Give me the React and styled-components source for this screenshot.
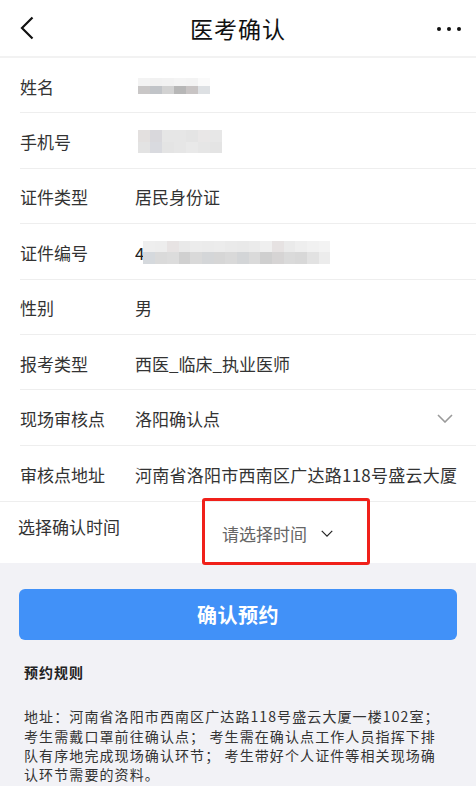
import React from 'react';
import styled, { createGlobalStyle } from 'styled-components';

const GlobalStyle = createGlobalStyle`
  html, body {
    margin: 0;
    padding: 0;
    background: #f2f2f6;
  }
  body {
    font-family: "Noto Sans CJK SC", "Noto Sans", sans-serif;
    color: #333;
  }
  * { box-sizing: border-box; }
`;

const Page = styled.div`
  width: 476px;
  min-height: 786px;
  background: #f2f2f6;
  overflow: hidden;
`;

const Header = styled.header`
  height: 58px;
  display: grid;
  grid-template-columns: 60px 1fr 60px;
  align-items: center;
  background: #fff;
  border-bottom: 2px solid #f2f2f2;
`;

const BackBtn = styled.button`
  border: 0;
  background: none;
  padding: 0 0 0 20px;
  height: 100%;
  display: flex;
  align-items: center;
`;

const Title = styled.h1`
  margin: 0;
  text-align: center;
  font-size: 23px;
  font-weight: 400;
  color: #111;
  letter-spacing: 1px;
`;

const MoreBtn = styled.div`
  display: flex;
  justify-content: flex-end;
  align-items: center;
  gap: 6px;
  padding-right: 15px;
  padding-top: 1px;
`;

const Dot = styled.span`
  width: 4px;
  height: 4px;
  border-radius: 50%;
  background: #111;
`;

const Form = styled.section`
  background: #fff;
  padding-left: 20px;
`;

const Row = styled.div`
  height: 55.4px;
  display: flex;
  align-items: center;
  border-bottom: ${(p) => (p.$last ? 'none' : '1px solid #eeeeee')};
  padding-top: 2px;
`;

const Label = styled.div`
  width: 115px;
  flex-shrink: 0;
  font-size: 17px;
  color: #333;
`;

const Value = styled.div`
  flex: 1;
  min-width: 0;
  font-size: 17px;
  color: #333;
  white-space: nowrap;
  overflow: hidden;
  letter-spacing: ${(p) => (p.$clip ? '0.25px' : '0')};
  margin-right: ${(p) => (p.$clip ? '19px' : '0')};
`;

const Chevron = styled.svg`
  flex-shrink: 0;
  margin-right: ${(p) => p.$mr || 0}px;
`;

const Mosaic = styled.div`
  display: grid;
  grid-template-columns: repeat(${(p) => p.$cols}, ${(p) => p.$cw}px);
  grid-auto-rows: ${(p) => p.$ch}px;
  margin-left: ${(p) => p.$ml || 0}px;
  filter: blur(0.4px);
`;

const Cell = styled.span`
  background: ${(p) => p.$c};
`;

const Masked = styled.div`
  display: flex;
  align-items: center;
`;

const Digit = styled.span`
  font-size: 17px;
  color: #222;
`;

const TimeRow = styled.div`
  position: relative;
  height: 62px;
  background: #fff;
  border-top: 1px solid #eeeeee;
  padding: 12px 0 0 18px;
`;

const TimeLabel = styled.div`
  font-size: 17px;
  color: #333;
`;

const Picker = styled.div`
  position: absolute;
  left: 202px;
  top: -4px;
  width: 168px;
  height: 67px;
  border: 3px solid #f0201a;
  border-radius: 3px;
  display: flex;
  align-items: center;
  padding: 4px 0 0 17px;
  gap: 14px;
`;

const PickerText = styled.span`
  font-size: 17px;
  color: #666;
`;

const Footer = styled.section`
  padding: 26px 19px 20px;
`;

const SubmitBtn = styled.button`
  width: 100%;
  height: 51px;
  border: 0;
  border-radius: 6px;
  background: #4191f8;
  color: #fff;
  font-family: inherit;
  font-size: 20px;
  font-weight: 700;
  letter-spacing: 0.5px;
`;

const Rules = styled.div`
  padding: 22px 0 0 5px;
`;

const RulesTitle = styled.h3`
  margin: 0;
  font-size: 14px;
  font-weight: 700;
  color: #222;
  letter-spacing: 1px;
  line-height: 20px;
`;

const RulesText = styled.p`
  margin: 25px 0 0;
  width: 422px;
  font-size: 14px;
  line-height: 19.4px;
  letter-spacing: 1.1px;
  color: #333;
`;

const DownIcon = ({ color, size = 16, mr }) => (
  <Chevron width={size} height={size / 2 + 1} viewBox="0 0 16 9" $mr={mr}>
    <path d="M1 1 L8 8 L15 1" fill="none" stroke={color} strokeWidth="1.6" />
  </Chevron>
);

const nameCells = [
  ['#f3f3f3', '#f1f1f1', '#f2f2f2', '#f4f4f4', '#f3f3f3', '#fafafa'],
  ['#c9c7c7', '#c1c4c8', '#d2d2d2', '#b7b7b7', '#c8c4c4', '#dde0e3'],
];

const phoneCells = [
  ['#e3e0df', '#d9d8dc', '#e6e6e6', '#e6e6e6', '#e4e4e4', '#e9e7e7', '#e7e7e7'],
  ['#e3e3e3', '#d9dadf', '#e4e4e4', '#e6e6e6', '#e9e9e9', '#e6e6e6', '#e4e4e4'],
];

const idCells = [
  ['#eeeeee', '#ededed', '#e7e3e3', '#e9e9e9', '#ececec', '#ebebeb', '#ececec', '#eaeaea', '#e9e9e9', '#ebebeb', '#efefef', '#e6e2e2', '#eaeaea', '#eeeeee', '#f1f1f1', '#f3f3f3'],
  ['#d5d9dd', '#dadada', '#dcdcdc', '#d0d0d0', '#d9d9d9', '#d4d6d8', '#d6d6d6', '#d9d9d9', '#d3d5d7', '#dadada', '#cfcfcf', '#d6d4d4', '#dadada', '#d8d8d8', '#e2e2e2', '#ececec'],
];

const MaskBlock = ({ cells, cw, ch, ml }) => (
  <Mosaic $cols={cells[0].length} $cw={cw} $ch={ch} $ml={ml}>
    {cells.flat().map((c, i) => <Cell key={i} $c={c} />)}
  </Mosaic>
);

const rows = [
  { label: '姓名', value: <MaskBlock cells={nameCells} cw={12} ch={8} ml={3} /> },
  { label: '手机号', value: <MaskBlock cells={phoneCells} cw={12} ch={11.5} ml={3} /> },
  { label: '证件类型', value: '居民身份证' },
  {
    label: '证件编号',
    value: (
      <Masked>
        <Digit>4</Digit>
        <MaskBlock cells={idCells} cw={11.7} ch={11.5} ml={-1} />
      </Masked>
    ),
  },
  { label: '性别', value: '男' },
  { label: '报考类型', value: '西医_临床_执业医师' },
  { label: '现场审核点', value: '洛阳确认点', select: true },
  { label: '审核点地址', value: '河南省洛阳市西南区广达路118号盛云大厦一楼102室', clip: true },
];

const App = () => (
  <Page>
    <GlobalStyle />
    <Header>
      <BackBtn aria-label="返回">
        <svg width="14" height="24" viewBox="0 0 14 24">
          <path d="M12.5 1.5 L2 12 L12.5 22.5" fill="none" stroke="#111" strokeWidth="2.2" />
        </svg>
      </BackBtn>
      <Title>医考确认</Title>
      <MoreBtn>
        <Dot />
        <Dot />
        <Dot />
      </MoreBtn>
    </Header>

    <Form>
      {rows.map((r, i) => (
        <Row key={r.label} $last={i === rows.length - 1}>
          <Label>{r.label}</Label>
          <Value $clip={r.clip}>{r.value}</Value>
          {r.select && <DownIcon color="#9a9a9a" size={16} mr={23} />}
        </Row>
      ))}
    </Form>

    <TimeRow>
      <TimeLabel>选择确认时间</TimeLabel>
      <Picker>
        <PickerText>请选择时间</PickerText>
        <DownIcon color="#222" size={12} />
      </Picker>
    </TimeRow>

    <Footer>
      <SubmitBtn>确认预约</SubmitBtn>
      <Rules>
        <RulesTitle>预约规则</RulesTitle>
        <RulesText>
          地址：河南省洛阳市西南区广达路118号盛云大厦一楼102室；
          <br />
          考生需戴口罩前往确认点； 考生需在确认点工作人员指挥下排队有序地完成现场确认环节； 考生带好个人证件等相关现场确认环节需要的资料。
        </RulesText>
      </Rules>
    </Footer>
  </Page>
);

export default App;
